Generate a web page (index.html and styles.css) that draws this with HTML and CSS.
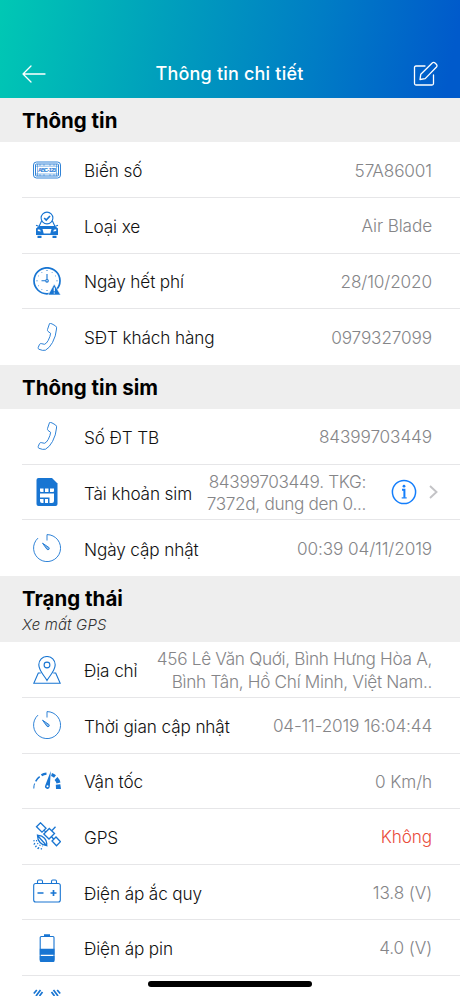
FILE: index.html
```html
<!DOCTYPE html>
<html lang="vi">
<head>
<meta charset="utf-8">
<meta name="viewport" content="width=device-width">
<title>Thông tin chi tiết</title>
<link rel="stylesheet" href="styles.css">
</head>
<body>
<svg class="defs" width="0" height="0">
  <symbol id="phone" viewBox="0 0 28 28"><path d="M16.500.600Q17.500.200 19 .9L22.500 2.900Q24 4 23.500 6 23 13 19.500 19.500 16.500 25 12.500 27.200 10 28 6 26.300 4.800 25.700 5.200 24.500L6.500 21.400Q7 20.500 8.200 20.600L11.500 21.300Q13.300 20.800 15.200 17.500 17.500 13 17.600 10.300L15 8.400Q14.200 7.700 14.500 6.500Z"/></symbol>
  <symbol id="timer" viewBox="0 0 28 28"><path d="M14 6.500V.6A13.500 13.500 0 1 1 5 4.100"/><path class="hand" d="M9.500 9.200l6.300 4.200q1 1.200.1 2-1 .8-2-.2z"/></symbol>
</svg>
<header class="nav">
  <svg class="back" viewBox="0 0 24 18"><path d="M23 9H1M9 1 1 9l8 8"/></svg>
  <h1>Thông tin chi tiết</h1>
  <svg class="edit" viewBox="0 0 26 26"><path d="M12 5H3q-1.500 0-1.500 1.500v16Q1.500 24 3 24h16q1.500 0 1.500-1.500V14M7 18.500l.8-5.300L19.500 1.800q1.300-1 2.800.4l1 1q1.300 1.400.2 2.800L12.200 17.600Z"/></svg>
</header>
<main>
  <section>
    <div class="head"><h2>Thông tin</h2></div>
    <div class="row"><svg class="icon fine" viewBox="0 0 28 28"><rect x=".5" y="6" width="27" height="16" rx="3"/><rect x="2.500" y="8" width="23" height="12" rx="1"/><path class="faint" d="M3 10.200h22M3 18h22M4.500 8v12M23.500 8v12M7 8v2M11 8v2M17 8v2M21 8v2M7 18v2M11 18v2M17 18v2M21 18v2"/><text x="5" y="16.300" textLength="18" class="plate">ABC - 123</text></svg><span class="label">Biển số</span><span class="value">57A86001</span></div>
    <div class="row"><svg class="icon" viewBox="0 0 28 28"><path d="M8.800 9.500 6 15.500M19.200 9.500l2.800 6M3 14.300l2.500 1M25 14.300l-2.500 1"/><circle cx="14" cy="7" r="5.900"/><path class="mid" d="m11.200 7 2 2 3.800-4"/><path class="solid" fill-rule="evenodd" d="M6 15h16l3 2.500V24H3v-6.500zM9.500 18l1.200 4.500h6.600l1.200-4.500zM4.800 18.300v1.800l3 .5-.7-1.800zM23.200 18.300v1.800l-3 .5.700-1.800zM4.500 24.800h4V27h-4zM19.500 24.800h4V27h-4z"/></svg><span class="label">Loại xe</span><span class="value">Air Blade</span></div>
    <div class="row"><svg class="icon" viewBox="0 0 28 28"><circle class="mid" cx="14" cy="13.800" r="13"/><path d="M14 7v5.500M12.500 13.800H8.500"/><circle cx="14" cy="13.800" r="1.300"/><path class="dots" d="M14 3v1M3.500 13.800h1M23.500 13.800h1M8.500 5l.4.600M19.500 5l-.4.600M5 8.700l.6.300M23 8.700l-.6.300M5 19l.6-.3M8.500 23l.4-.6M14 23v1"/><path class="solid halo" d="m21.200 17 6.500 11H15z"/><path class="mark" d="M21.300 20.500v3.800M21.300 25.500v1"/></svg><span class="label">Ngày hết phí</span><span class="value">28/10/2020</span></div>
    <div class="row"><svg class="icon fine"><use href="#phone"/></svg><span class="label">SĐT khách hàng</span><span class="value">0979327099</span></div>
  </section>
  <section>
    <div class="head"><h2>Thông tin sim</h2></div>
    <div class="row"><svg class="icon fine"><use href="#phone"/></svg><span class="label">Số ĐT TB</span><span class="value">84399703449</span></div>
    <div class="row"><svg class="icon" viewBox="0 0 28 28"><path class="solid" d="M5.500 0H19l5.500 5.500V26q0 2-2 2h-17q-2 0-2-2V2q0-2 2-2z"/><path class="chip" d="M7 10.500h3.500V14H8q-1 0-1-1zM12 10.500h3.500V14H12zM17 10.500h4V13q0 1-1 1h-3zM7 15.500h14V23q0 2-2 2h-2.500v-5.500H7zM7 21h3.500v4H9q-2 0-2-2zM12 21h3v4h-3z"/></svg><span class="label">Tài khoản sim</span><span class="value sim">84399703449. TKG:<br>7372d, dung den 0...</span><svg class="info" viewBox="0 0 26 26"><circle cx="13" cy="13" r="11.600"/><path class="i" d="M11 10.700h2.400v8"/><path class="serif" d="M10.700 18.900h5"/><circle class="dot" cx="13" cy="7.200" r="1.400"/></svg><svg class="chev" viewBox="0 0 9 14"><path d="m1 1 6.500 6L1 13"/></svg></div>
    <div class="row"><svg class="icon fine"><use href="#timer"/></svg><span class="label">Ngày cập nhật</span><span class="value">00:39 04/11/2019</span></div>
  </section>
  <section>
    <div class="head tall"><h2>Trạng thái</h2><p>Xe mất GPS</p></div>
    <div class="row"><svg class="icon" viewBox="0 0 28 28"><path d="M14 24.500C11.500 20 5.800 14.500 5.800 8.700a8.200 8.200 0 0 1 16.400 0C22.200 14.500 16.500 20 14 24.500zM7.700 17H5.300L.8 27.200h26.400L22.700 17h-2.400"/><circle cx="14" cy="9" r="2.900"/></svg><span class="label">Địa chỉ</span><span class="value addr">456 Lê Văn Quới, Bình Hưng Hòa A,<br>Bình Tân, Hồ Chí Minh, Việt Nam..</span></div>
    <div class="row"><svg class="icon fine"><use href="#timer"/></svg><span class="label">Thời gian cập nhật</span><span class="value stamp">04-11-2019 16:04:44</span></div>
    <div class="row"><svg class="icon" viewBox="0 0 28 28"><path class="g1" d="M.8 21.500q0-3 .8-5"/><path class="g2" d="M2.700 14.300q1.500-3 4-4.700"/><path class="g3" d="M8.500 8.300q2.300-1.400 5-1.600"/><path class="g4" d="M18.500 7.500q2 .7 3.500 2"/><path class="g5" d="M23 11.500q2 2 2.500 4.500"/><path class="solid" d="M22.800 17.800l4.500-.6.700 4.800h-5zM17.800 4l-1 15.800a2.400 2.400 0 1 1-4.500-1.500z"/><circle class="hole" cx="14.500" cy="19.300" r="1"/></svg><span class="label">Vận tốc</span><span class="value">0 Km/h</span></div>
    <div class="row"><svg class="icon" viewBox="0 0 28 28"><path class="sat" d="M3.500 4.700 7.500.8l5.500 5.500L9 10.200zM16.300 6.500l5.200 5-5.500 5.500-5.200-5zM19 19l4-4 4.500 4.700-4 4zM11 8.500l2.200 1.500M19 8.500l3.500-3.700M18.500 14.500l2 2.500M4.500 13.500l9 10q-4-.3-6.500-3t-2.500-7zM4.500 13.500q4-.5 7 2.700t2 7.300"/><path class="signal" d="M1 18q0 8 9 9M3.500 18q.5 5.500 6.500 6M1 21.500q1 4 5 5.500"/></svg><span class="label">GPS</span><span class="value red">Không</span></div>
    <div class="row"><svg class="icon" viewBox="0 0 28 28"><rect x=".7" y="5.500" width="26.600" height="18.500" rx="2"/><path d="M4.500 5.300V3.500q0-1.500 1.200-1.500h2.600q1.200 0 1.200 1.500v1.800M18.500 5.300V3.500q0-1.500 1.200-1.500h2.600q1.200 0 1.200 1.500v1.800"/><path class="mid" d="M4.500 15h6M17.500 15h6M20.500 12v6"/></svg><span class="label">Điện áp ắc quy</span><span class="value">13.8 (V)</span></div>
    <div class="row"><svg class="icon" viewBox="0 0 28 28"><rect x="7.200" y="2.500" width="13.800" height="24" rx="1"/><path class="solid" d="M11 .2h6v2h-6zM6.800 14.700h14.700v6H6.800zM6.800 21.900h14.700V27q0 1-1 1H7.800q-1 0-1-1z"/></svg><span class="label">Điện áp pin</span><span class="value">4.0 (V)</span></div>
    <div class="row"><svg class="icon" viewBox="0 0 28 28"><path class="mid" d="m.8 4.500 3-3.500M3 7l4.500-6M6.500 7l3-4M27.200 4.500l-3-3.500M25 7l-4.500-6M21.500 7l-3-4"/></svg></div>
  </section>
</main>
<div class="home"></div>
</body>
</html>
```
FILE: styles.css
```css
* { box-sizing: border-box; }
html, body { margin: 0; height: 996px; overflow: hidden; }
body { width: 460px; background: #fff; color: #111; font-family: Inter, "Noto Sans", sans-serif; position: relative; }
h1, h2, p { margin: 0; }
.defs { position: absolute; }
.nav { height: 98px; padding: 49px 22px 0; display: flex; align-items: center; justify-content: space-between; color: #fff; background: linear-gradient(100deg, #00c8b4 0%, #00a0bc 35%, #007dc5 68%, #005acb 97%); }
.nav svg { fill: none; stroke: #fff; stroke-width: 1.3; stroke-linecap: round; stroke-linejoin: round; }
.back { width: 24px; height: 18px; }
.edit { width: 26px; height: 26px; margin-right: -1px; }
h1 { font-size: 18px; font-weight: 500; letter-spacing: .2px; }
.head { height: 44.400px; padding: 10px 22px 0; background: #eee; }
.head.tall { height: 66.400px; }
h2 { font-size: 20.500px; line-height: 25px; font-weight: 700; color: #000; letter-spacing: 0; }
.head p { font-size: 15px; line-height: 19px; padding-top: 4px; font-style: italic; font-weight: 300; letter-spacing: .15px; color: #333; }
.row { height: 55.600px; margin-left: 22px; padding: 0 28px 0 11px; display: flex; align-items: center; border-bottom: 1px solid #e6e6e8; }
section:not(:last-child) .row:last-child { border-bottom: 0; }
.icon { width: 28px; height: 28px; flex: none; fill: none; stroke: #1875d2; stroke-width: 1.1; }
.fine { stroke-width: .9; }
.faint { stroke-width: .5; }
.hand { fill: #1875d2; fill-opacity: .5; }
.mid { stroke-width: 1.700; }
.solid { fill: #1875d2; stroke: none; }
.plate { font: 700 5.500px "Liberation Sans", sans-serif; fill: #1875d2; stroke: none; }
.dots { stroke-width: 1; }
.halo { stroke: #fff; stroke-width: .6; }
.mark { stroke: #fff; stroke-width: 1.200; }
.chip, .hole { fill: #fff; stroke: none; }
.g1 { stroke-width: 1; } .g2 { stroke-width: 1.500; } .g3 { stroke-width: 2.300; } .g4 { stroke-width: 3; } .g5 { stroke-width: 4; }
.sat { stroke-width: 1.300; }
.signal { stroke-width: 1.100; stroke-dasharray: 1.300 1.700; }
.label { margin-left: 23px; padding-top: 2px; font-size: 17.200px; font-weight: 300; letter-spacing: -.13px; white-space: nowrap; }
.value { margin-left: auto; padding-top: 2px; font-size: 17.200px; line-height: 22.200px; font-weight: 300; letter-spacing: -.12px; color: #858588; text-align: right; white-space: nowrap; }
.sim { letter-spacing: -.32px; }
.addr { letter-spacing: -.31px; }
.stamp { letter-spacing: -.2px; }
.red { color: #e94b3c; }
.info { width: 26px; height: 26px; margin: 0 12px 0 25px; fill: none; stroke: #147efb; stroke-width: 1.500; flex: none; }
.info .i { stroke-width: 2; }
.info .serif { stroke-width: 1.200; }
.info .dot { fill: #147efb; stroke: none; }
.chev { width: 9px; height: 14px; margin-right: -6px; fill: none; stroke: #c3c3c6; stroke-width: 1.900; flex: none; }
.home { position: absolute; left: 148px; top: 981px; width: 164px; height: 6px; border-radius: 3px; background: #000; }
```
